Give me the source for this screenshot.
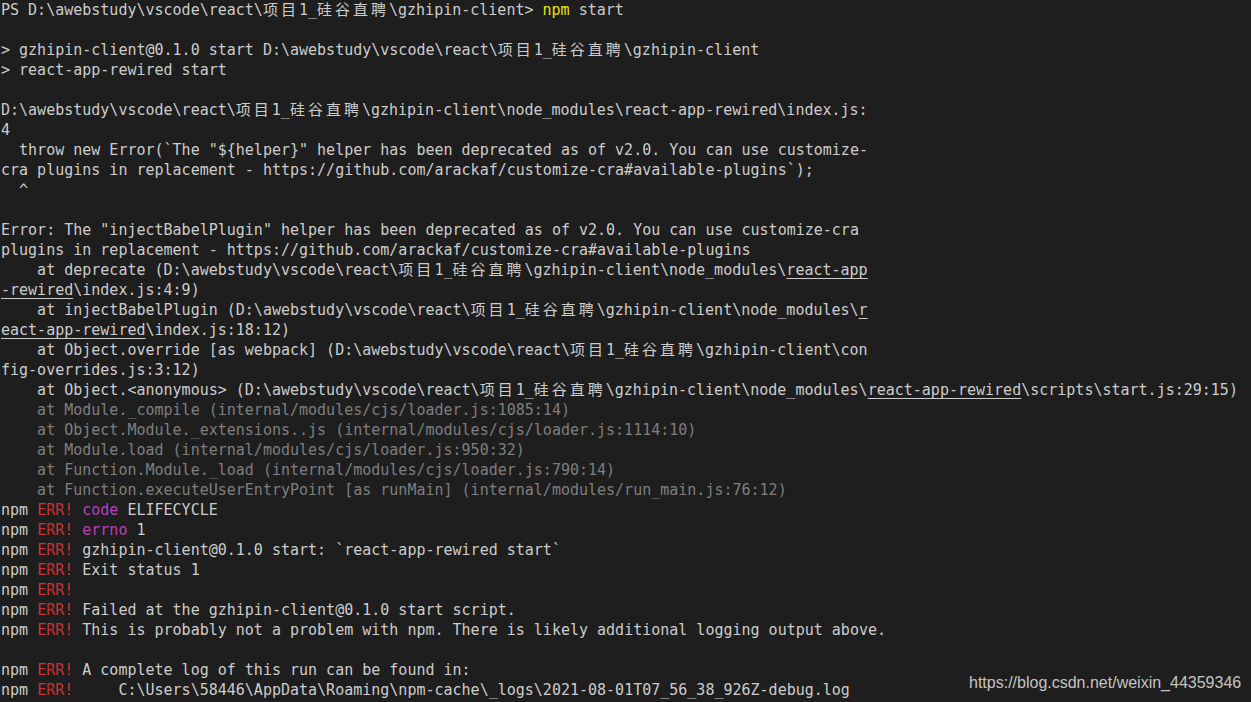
import React from "react";

const CJK_RE = /[\u3400-\u9fff]/;

function T({ children }) {
  const s = String(children);
  const parts = [];
  let buf = "";
  let cjk = "";
  let k = 0;
  const flushBuf = () => {
    if (buf) parts.push(<React.Fragment key={k++}>{buf}</React.Fragment>);
    buf = "";
  };
  const flushCjk = () => {
    if (cjk)
      parts.push(
        <span
          key={k++}
          className="text-[15px] leading-none tracking-[3px] [font-family:'Noto_Sans_CJK_SC',sans-serif]"
        >
          {cjk}
        </span>
      );
    cjk = "";
  };
  for (const ch of s) {
    if (CJK_RE.test(ch)) {
      flushBuf();
      cjk += ch;
    } else {
      flushCjk();
      buf += ch;
    }
  }
  flushBuf();
  flushCjk();
  return <>{parts}</>;
}

const U = ({ children }) => (
  <span className="underline underline-offset-[3px] decoration-[1px]">{children}</span>
);
const Err = () => <span className="text-[#cd3131]">ERR!</span>;
const Npm = ({ children }) => (
  <>
    npm <Err />
    {children}
  </>
);

const Line = ({ children, className = "" }) => (
  <div className={`h-[20px] leading-[20px] whitespace-pre ${className}`}>{children}</div>
);

const P = "D:\\awebstudy\\vscode\\react\\项目1_硅谷直聘\\gzhipin-client";

export default function App() {
  return (
    <div className="relative w-[1251px] h-[702px] overflow-hidden bg-[#1e1e1e] text-[#cccccc] text-[15px] pl-[1px] [font-family:'DejaVu_Sans_Mono','Liberation_Mono',monospace]">
      <Line>
        <T>{"PS " + P + "> "}</T>
        <span className="text-[#e5e510]">npm</span> start
      </Line>
      <Line />
      <Line>
        <T>{"> gzhipin-client@0.1.0 start " + P}</T>
      </Line>
      <Line>{"> react-app-rewired start"}</Line>
      <Line />
      <Line>
        <T>{P + "\\node_modules\\react-app-rewired\\index.js:"}</T>
      </Line>
      <Line>4</Line>
      <Line>{'  throw new Error(`The "${helper}" helper has been deprecated as of v2.0. You can use customize-'}</Line>
      <Line>{"cra plugins in replacement - https://github.com/arackaf/customize-cra#available-plugins`);"}</Line>
      <Line>{"  ^"}</Line>
      <Line />
      <Line>{'Error: The "injectBabelPlugin" helper has been deprecated as of v2.0. You can use customize-cra'}</Line>
      <Line>{"plugins in replacement - https://github.com/arackaf/customize-cra#available-plugins"}</Line>
      <Line>
        <T>{"    at deprecate (" + P + "\\node_modules\\"}</T>
        <U>react-app</U>
      </Line>
      <Line>
        <U>-rewired</U>
        {"\\index.js:4:9)"}
      </Line>
      <Line>
        <T>{"    at injectBabelPlugin (" + P + "\\node_modules\\"}</T>
        <U>r</U>
      </Line>
      <Line>
        <U>eact-app-rewired</U>
        {"\\index.js:18:12)"}
      </Line>
      <Line>
        <T>{"    at Object.override [as webpack] (" + P + "\\con"}</T>
      </Line>
      <Line>{"fig-overrides.js:3:12)"}</Line>
      <Line>
        <T>{"    at Object.<anonymous> (" + P + "\\node_modules\\"}</T>
        <U>react-app-rewired</U>
        {"\\scripts\\start.js:29:15)"}
      </Line>
      <Line className="text-[#7f7f7f]">{"    at Module._compile (internal/modules/cjs/loader.js:1085:14)"}</Line>
      <Line className="text-[#7f7f7f]">{"    at Object.Module._extensions..js (internal/modules/cjs/loader.js:1114:10)"}</Line>
      <Line className="text-[#7f7f7f]">{"    at Module.load (internal/modules/cjs/loader.js:950:32)"}</Line>
      <Line className="text-[#7f7f7f]">{"    at Function.Module._load (internal/modules/cjs/loader.js:790:14)"}</Line>
      <Line className="text-[#7f7f7f]">{"    at Function.executeUserEntryPoint [as runMain] (internal/modules/run_main.js:76:12)"}</Line>
      <Line>
        <Npm>
          {" "}
          <span className="text-[#bc3fbc]">code</span> ELIFECYCLE
        </Npm>
      </Line>
      <Line>
        <Npm>
          {" "}
          <span className="text-[#bc3fbc]">errno</span> 1
        </Npm>
      </Line>
      <Line>
        <Npm>{" gzhipin-client@0.1.0 start: `react-app-rewired start`"}</Npm>
      </Line>
      <Line>
        <Npm>{" Exit status 1"}</Npm>
      </Line>
      <Line>
        <Npm />
      </Line>
      <Line>
        <Npm>{" Failed at the gzhipin-client@0.1.0 start script."}</Npm>
      </Line>
      <Line>
        <Npm>{" This is probably not a problem with npm. There is likely additional logging output above."}</Npm>
      </Line>
      <Line />
      <Line>
        <Npm>{" A complete log of this run can be found in:"}</Npm>
      </Line>
      <Line>
        <Npm>{"     C:\\Users\\58446\\AppData\\Roaming\\npm-cache\\_logs\\2021-08-01T07_56_38_926Z-debug.log"}</Npm>
      </Line>

      <div className="absolute left-[969px] top-[673px] text-[16px] leading-[20px] text-[#c4c4c4] whitespace-nowrap [font-family:'Liberation_Sans',Arial,sans-serif]">
        https://blog.csdn.net/weixin_44359346
      </div>
    </div>
  );
}
